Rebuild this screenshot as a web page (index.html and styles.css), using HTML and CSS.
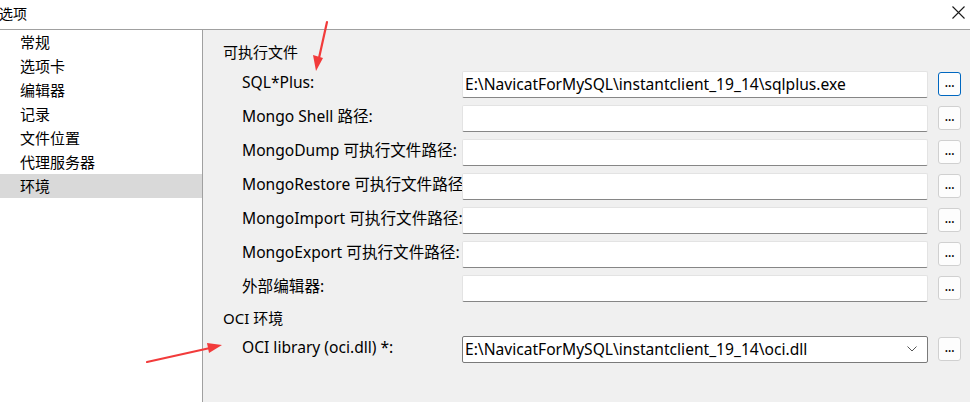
FILE: index.html
```html
<!DOCTYPE html>
<html>
<head>
<meta charset="utf-8">
<link rel="stylesheet" href="styles.css">
</head>
<body>
<div class="window">
  <div class="titlebar">
    <span class="title">选项</span>
    <svg class="close" width="13" height="13" viewBox="0 0 13 13"><path d="M0.5 0.5 L12.5 12.5 M12.5 0.5 L0.5 12.5" stroke="#1a1a1a" stroke-width="1.1" fill="none"/></svg>
  </div>
  <div class="main">
    <ul class="sidebar">
      <li>常规</li>
      <li>选项卡</li>
      <li>编辑器</li>
      <li>记录</li>
      <li>文件位置</li>
      <li>代理服务器</li>
      <li class="selected">环境</li>
    </ul>
    <div class="panel">
      <div class="section-title">可执行文件</div>
      <div class="grid">
        <label class="lbl">SQL*Plus:</label>
        <div class="input">E:\NavicatForMySQL\instantclient_19_14\sqlplus.exe</div>
        <button class="btn focus">...</button>

        <label class="lbl">Mongo Shell 路径:</label>
        <div class="input"></div>
        <button class="btn">...</button>

        <label class="lbl">MongoDump 可执行文件路径:</label>
        <div class="input"></div>
        <button class="btn">...</button>

        <label class="lbl">MongoRestore 可执行文件路径:</label>
        <div class="input"></div>
        <button class="btn">...</button>

        <label class="lbl">MongoImport 可执行文件路径:</label>
        <div class="input"></div>
        <button class="btn">...</button>

        <label class="lbl">MongoExport 可执行文件路径:</label>
        <div class="input"></div>
        <button class="btn">...</button>

        <label class="lbl">外部编辑器:</label>
        <div class="input"></div>
        <button class="btn">...</button>
      </div>
      <div class="section-title second">OCI 环境</div>
      <div class="grid">
        <label class="lbl">OCI library (oci.dll) *:</label>
        <div class="input combo"><span class="combo-text">E:\NavicatForMySQL\instantclient_19_14\oci.dll</span><svg class="chev" width="10" height="6" viewBox="0 0 10 6"><path d="M0.5 0.5 L5 5 L9.5 0.5" stroke="#555" stroke-width="1" fill="none"/></svg></div>
        <button class="btn">...</button>
      </div>
    </div>
  </div>
  <svg class="arrows" width="970" height="402" viewBox="0 0 970 402">
    <path d="M327 22 L319 58" stroke="#f23b3b" stroke-width="2.2" fill="none" stroke-linecap="round"/>
    <polygon points="313,55 323,58 316,71" fill="#f23b3b"/>
    <path d="M147 362 L210 348" stroke="#f23b3b" stroke-width="2.2" fill="none" stroke-linecap="round"/>
    <polygon points="207,343 209,353 222,345" fill="#f23b3b"/>
  </svg>
</div>
</body>
</html>
```

FILE: styles.css
```css
* { box-sizing: border-box; }
html, body { margin: 0; padding: 0; }
body {
  width: 970px;
  height: 402px;
  overflow: hidden;
  font-family: "Segoe UI", "Noto Sans", "Noto Sans CJK SC", sans-serif;
  font-size: 15px;
  color: #000;
  background: #fff;
}
.window {
  position: relative;
  width: 970px;
  height: 402px;
  display: flex;
  flex-direction: column;
}
.titlebar {
  height: 30px;
  border-bottom: 1px solid #a0a0a0;
  display: flex;
  align-items: center;
  justify-content: space-between;
  padding: 0 5px 2px 0;
  background: #fff;
}
.title {
  font-size: 14px;
  line-height: 20px;
  margin-left: -1px;
}
.close { display: block; margin-top: -3px; }
.main {
  flex: 1;
  display: flex;
}
.sidebar {
  list-style: none;
  margin: 0;
  padding: 0;
  width: 203px;
  border-right: 1px solid #a0a0a0;
  background: #fff;
}
.sidebar li {
  height: 24px;
  line-height: 24px;
  padding-left: 20px;
}
.sidebar li.selected { background: #d9d9d9; }
.panel {
  flex: 1;
  background: #f0f0f0;
  padding: 12px 0 0 20px;
}
.section-title {
  line-height: 20px;
  height: 20px;
}
.section-title.second { margin-top: 4px; }
.grid {
  display: grid;
  grid-template-columns: 220px 466px 33px;
  grid-auto-rows: 34px;
  align-items: center;
  padding-left: 19px;
  font-size: 15.6px;
}
.section-title + .grid { margin-top: 4px; }
.section-title.second + .grid { margin-top: 3px; }
.lbl {
  white-space: nowrap;
  line-height: 20px;
  margin-top: -3px;
}
.input {
  height: 27px;
  background: #fff;
  border: 1px solid #e3e3e3;
  border-bottom: 1px solid #868686;
  border-radius: 2px;
  padding: 0 2px;
  line-height: 24px;
  white-space: nowrap;
  overflow: hidden;
  margin-top: 2px;
}
.combo {
  border: 1px solid #7a7a7a;
  display: flex;
  align-items: center;
  justify-content: space-between;
  padding-right: 10px;
}
.combo-text { line-height: 24px; }
.chev { display: block; }
.btn {
  justify-self: end;
  width: 23px;
  height: 24px;
  padding: 0 0 5px 0;
  margin: 2px 0 0 0;
  border: 1px solid #d0d0d0;
  border-radius: 3px;
  background: #fdfdfd;
  font-family: "Segoe UI", "Noto Sans", sans-serif;
  font-size: 14px;
  line-height: 16px;
  color: #000;
  letter-spacing: -0.5px;
  display: flex;
  align-items: flex-end;
  justify-content: center;
}
.btn.focus { border: 1.5px solid #0067c0; }
.arrows {
  position: absolute;
  left: 0;
  top: 0;
  pointer-events: none;
}
```
